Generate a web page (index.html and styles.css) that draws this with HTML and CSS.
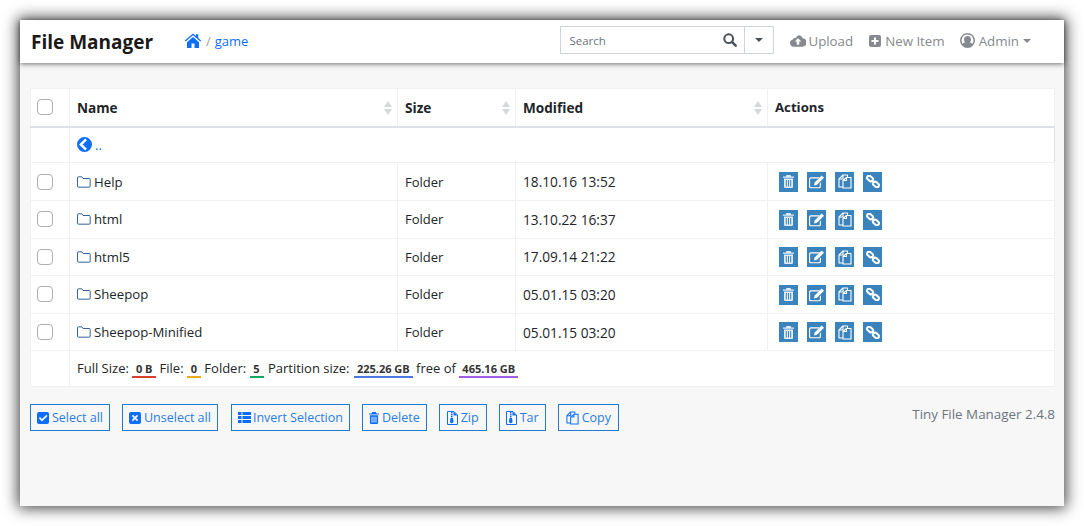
FILE: index.html
```html
<!DOCTYPE html>
<html lang="en">
<head>
  <meta charset="UTF-8" />
  <title>File Manager</title>
  <link rel="stylesheet" href="styles.css">
</head>
<body>
  <svg class="sprites" width="0" height="0">
    <symbol id="i-home" viewBox="0 0 24 20"><path d="M12 0.5 1 10l1.2 1.4L12 3l9.8 8.4L23 10l-4-3.5V1.5h-3v2.4zM4 12.2V20h6v-6h4v6h6v-7.8L12 5.2z"/></symbol>
    <symbol id="i-back" viewBox="0 0 16 16"><path fill-rule="evenodd" d="M8 0a8 8 0 1 0 0 16A8 8 0 0 0 8 0zm2.6 3.4L6 8l4.6 4.6-1.9 1.9L2.2 8l6.5-6.5z"/></symbol>
    <symbol id="i-folder" viewBox="0 0 15 13"><path fill="none" stroke="currentColor" d="M1.5.9h3.6l1.3 1.8h6.8a1 1 0 0 1 1 1v7.4a1 1 0 0 1-1 1H1.5a1 1 0 0 1-1-1V1.9a1 1 0 0 1 1-1z"/></symbol>
    <symbol id="i-search" viewBox="0 0 16 16"><circle cx="6.5" cy="6.5" r="5" fill="none" stroke="currentColor" stroke-width="2.3"/><path d="m10.2 10.2 4.3 4.3" stroke="currentColor" stroke-width="2.8" stroke-linecap="round"/></symbol>
    <symbol id="i-cloud" viewBox="0 0 17 12"><path fill-rule="evenodd" d="M9 0a4.6 4.6 0 0 1 4.3 3A4.3 4.3 0 0 1 13 12H4a3.8 3.8 0 0 1-1-7.5A3 3 0 0 1 6.300 2.700 4.600 4.600 0 0 1 9 0zm-.5 3L5 6.600h2.200V10h2.600V6.600H12z"/></symbol>
    <symbol id="i-plus" viewBox="0 0 12 12"><path fill-rule="evenodd" d="M2 0h8a2 2 0 0 1 2 2v8a2 2 0 0 1-2 2H2a2 2 0 0 1-2-2V2a2 2 0 0 1 2-2zm3 2.500V5H2.500v2H5v2.500h2V7h2.500V5H7V2.500z"/></symbol>
    <symbol id="i-user" viewBox="0 0 14 14"><path fill-rule="evenodd" d="M7 0a7 7 0 1 0 0 14A7 7 0 0 0 7 0zm0 1.500a5.500 5.500 0 0 1 4.400 8.800C10.800 9.300 9.900 8.800 9.100 8.600a3.300 3.300 0 1 0-4.200 0c-.8.200-1.700.7-2.300 1.700A5.500 5.500 0 0 1 7 1.500z"/></symbol>
    <symbol id="i-trash" viewBox="0 0 11 13"><path d="M3.500 0h4l.7 1.500H11v1.200H0V1.500h2.800zM1 3.500h9v8.200a1.300 1.300 0 0 1-1.300 1.300H2.300A1.300 1.300 0 0 1 1 11.700zm1.800 1.500v6.500h1V5zm2.200 0v6.500h1V5zm2.200 0v6.500h1V5z"/></symbol>
    <symbol id="i-edit" viewBox="0 0 16 14"><path d="M2 2h9.500L10.200 3.200H2.200a1 1 0 0 0-1 1v7.300a1 1 0 0 0 1 1h8.300a1 1 0 0 0 1-1V8.500l1.200-1.200v4.400a2 2 0 0 1-2 2H2a2 2 0 0 1-2-2V4a2 2 0 0 1 2-2z"/><path d="M13.500 0 16 2.500 8.500 10l-3.200.7.700-3.200z"/></symbol>
    <symbol id="i-copy" viewBox="0 0 14 15"><g stroke="currentColor" stroke-width="1.100" stroke-linejoin="round"><path fill="none" d="M1 5 5 1h4.500v12H1z"/><path fill="none" d="M5 1v4H1"/><path fill="var(--bg)" d="M5 6.500 8.500 3.500H13V14H5z"/><path fill="none" d="M8.500 3.500v3H5"/></g></symbol>
    <symbol id="i-link" viewBox="0 0 15 14"><g fill="none" stroke="currentColor" stroke-width="2.200"><rect x="0.800" y="1.600" width="7" height="4.400" rx="2.200" transform="rotate(40 4.300 3.800)"/><rect x="7.200" y="8" width="7" height="4.400" rx="2.200" transform="rotate(40 10.700 10.200)"/></g><path d="m6 5.500 3 3" stroke="currentColor" stroke-width="2.200"/></symbol>
    <symbol id="i-checked" viewBox="0 0 12 12"><path fill-rule="evenodd" d="M2 0h8a2 2 0 0 1 2 2v8a2 2 0 0 1-2 2H2a2 2 0 0 1-2-2V2a2 2 0 0 1 2-2zm7.300 2.800L5 7 3 5 1.800 6.200 5 9.400l5.500-5.400z"/></symbol>
    <symbol id="i-unchecked" viewBox="0 0 12 12"><path fill-rule="evenodd" d="M2 0h8a2 2 0 0 1 2 2v8a2 2 0 0 1-2 2H2a2 2 0 0 1-2-2V2a2 2 0 0 1 2-2zm2 2.800L2.800 4l2 2-2 2L4 9.200l2-2 2 2L9.200 8l-2-2 2-2L8 2.800l-2 2z"/></symbol>
    <symbol id="i-list" viewBox="0 0 13 11"><path d="M0 0h3.500v3H0zM4.500 0H13v3H4.500zM0 4h3.500v3H0zM4.500 4H13v3H4.500zM0 8h3.500v3H0zM4.500 8H13v3H4.500z"/></symbol>
    <symbol id="i-zip" viewBox="0 0 11 14"><path fill="none" stroke="currentColor" d="M.5.500h6.500l3.500 3.500v9.500H.5z"/><path d="M6.500.500V4.500h4zM4 1h1.500v1.500H4zM4 3h1.500v1.500H4zM4 5h1.500v1.500H4zM3.500 7h2.500l.5 3.500a1.500 1.500 0 1 1-3.500 0z"/></symbol>
  </svg>

  <div class="window">
    <nav class="topbar">
      <span class="brand">File Manager</span>
      <div class="crumbs">
        <svg class="ico-home"><use href="#i-home"/></svg>
        <span class="sep">/</span>
        <a>game</a>
      </div>
      <div class="search">
        <span class="search-text">Search</span>
        <svg class="ico-search"><use href="#i-search"/></svg>
        <span class="search-drop"><i class="caret"></i></span>
      </div>
      <a class="nav-link"><svg class="ico-cloud"><use href="#i-cloud"/></svg>Upload</a>
      <a class="nav-link nav-new"><svg class="ico-plus"><use href="#i-plus"/></svg>New Item</a>
      <a class="nav-link"><svg class="ico-user"><use href="#i-user"/></svg>Admin<i class="caret"></i></a>
    </nav>

    <main class="content">
      <table class="files">
        <colgroup>
          <col class="c-check"><col class="c-name"><col class="c-size"><col class="c-date"><col>
        </colgroup>
        <thead>
          <tr>
            <th><span class="check"></span></th>
            <th class="sort">Name</th>
            <th class="sort">Size</th>
            <th class="sort">Modified</th>
            <th class="th-actions">Actions</th>
          </tr>
        </thead>
        <tbody>
          <tr class="row-up">
            <td class="no-right"></td>
            <td colspan="4"><a class="up"><svg class="ico-back"><use href="#i-back"/></svg> ..</a></td>
          </tr>
          <tr>
            <td><span class="check"></span></td>
            <td class="name"><svg class="ico-folder"><use href="#i-folder"/></svg>Help</td>
            <td>Folder</td>
            <td class="when">18.10.16 13:52</td>
            <td class="actions">
              <a class="act"><svg class="ico-trash"><use href="#i-trash"/></svg></a><a class="act"><svg class="ico-edit"><use href="#i-edit"/></svg></a><a class="act"><svg class="ico-copy"><use href="#i-copy"/></svg></a><a class="act"><svg class="ico-link"><use href="#i-link"/></svg></a>
            </td>
          </tr>
          <tr>
            <td><span class="check"></span></td>
            <td class="name"><svg class="ico-folder"><use href="#i-folder"/></svg>html</td>
            <td>Folder</td>
            <td class="when">13.10.22 16:37</td>
            <td class="actions">
              <a class="act"><svg class="ico-trash"><use href="#i-trash"/></svg></a><a class="act"><svg class="ico-edit"><use href="#i-edit"/></svg></a><a class="act"><svg class="ico-copy"><use href="#i-copy"/></svg></a><a class="act"><svg class="ico-link"><use href="#i-link"/></svg></a>
            </td>
          </tr>
          <tr>
            <td><span class="check"></span></td>
            <td class="name"><svg class="ico-folder"><use href="#i-folder"/></svg>html5</td>
            <td>Folder</td>
            <td class="when">17.09.14 21:22</td>
            <td class="actions">
              <a class="act"><svg class="ico-trash"><use href="#i-trash"/></svg></a><a class="act"><svg class="ico-edit"><use href="#i-edit"/></svg></a><a class="act"><svg class="ico-copy"><use href="#i-copy"/></svg></a><a class="act"><svg class="ico-link"><use href="#i-link"/></svg></a>
            </td>
          </tr>
          <tr>
            <td><span class="check"></span></td>
            <td class="name"><svg class="ico-folder"><use href="#i-folder"/></svg>Sheepop</td>
            <td>Folder</td>
            <td class="when">05.01.15 03:20</td>
            <td class="actions">
              <a class="act"><svg class="ico-trash"><use href="#i-trash"/></svg></a><a class="act"><svg class="ico-edit"><use href="#i-edit"/></svg></a><a class="act"><svg class="ico-copy"><use href="#i-copy"/></svg></a><a class="act"><svg class="ico-link"><use href="#i-link"/></svg></a>
            </td>
          </tr>
          <tr>
            <td><span class="check"></span></td>
            <td class="name"><svg class="ico-folder"><use href="#i-folder"/></svg>Sheepop-Minified</td>
            <td>Folder</td>
            <td class="when">05.01.15 03:20</td>
            <td class="actions">
              <a class="act"><svg class="ico-trash"><use href="#i-trash"/></svg></a><a class="act"><svg class="ico-edit"><use href="#i-edit"/></svg></a><a class="act"><svg class="ico-copy"><use href="#i-copy"/></svg></a><a class="act"><svg class="ico-link"><use href="#i-link"/></svg></a>
            </td>
          </tr>
        </tbody>
        <tfoot>
          <tr>
            <td class="no-right"></td>
            <td colspan="4" class="summary">
              Full Size: <span class="badge b-red">0 B</span>
              File: <span class="badge b-yellow">0</span>
              Folder: <span class="badge b-green">5</span>
              Partition size: <span class="badge b-blue">225.26 GB</span>
              free of <span class="badge b-purple">465.16 GB</span>
            </td>
          </tr>
        </tfoot>
      </table>

      <div class="toolbar">
        <a class="btn"><svg class="ico-sq"><use href="#i-checked"/></svg>Select all</a>
        <a class="btn"><svg class="ico-sq"><use href="#i-unchecked"/></svg>Unselect all</a>
        <a class="btn btn-invert"><svg class="ico-list"><use href="#i-list"/></svg>Invert Selection</a>
        <a class="btn"><svg class="ico-trash-sm"><use href="#i-trash"/></svg>Delete</a>
        <a class="btn btn-wide"><svg class="ico-zip"><use href="#i-zip"/></svg>Zip</a>
        <a class="btn"><svg class="ico-zip"><use href="#i-zip"/></svg>Tar</a>
        <a class="btn btn-wide"><svg class="ico-copy-sm"><use href="#i-copy"/></svg>Copy</a>
        <span class="version">Tiny File Manager 2.4.8</span>
      </div>
    </main>
  </div>
</body>
</html>
```

FILE: styles.css
```css
html, body {
  margin: 0;
  height: 526px;
  overflow: hidden;
  background: #fff;
}

body {
  padding: 20px;
  box-sizing: border-box;
  font-family: "Open Sans", "Noto Sans", sans-serif;
  font-size: 13px;
  color: #212529;
}

svg {
  fill: currentColor;
  flex: none;
}

.sprites {
  position: absolute;
}

.window {
  width: 1044px;
  height: 486px;
  background: #f7f7f7;
  box-shadow: 0 0 14px 2px rgba(0, 0, 0, 0.75);
}

.topbar {
  display: flex;
  align-items: center;
  height: 43px;
  box-sizing: border-box;
  padding: 0 33px 3px 11px;
  background: #fff;
  box-shadow: 0 1px 5px rgba(0, 0, 0, 0.55);
  position: relative;
}

.brand {
  font-size: 19px;
  font-weight: 700;
  color: #1a1a1a;
  width: 153px;
  margin-top: 3px;
}

.crumbs {
  display: flex;
  align-items: center;
  color: #0d6efd;
  font-size: 13px;
  margin-top: 1px;
}

.ico-home {
  width: 18px;
  height: 15px;
}

.sep {
  color: #9aa0a6;
  margin: 0 4px 0 4px;
}

.search {
  display: flex;
  align-items: center;
  width: 214px;
  height: 28px;
  box-sizing: border-box;
  margin-left: auto;
  margin-right: 16px;
  border: 1px solid #ced4da;
  font-size: 11.5px;
  color: #6c757d;
}

.search-text {
  flex: 1;
  padding-left: 8px;
}

.ico-search {
  width: 14px;
  height: 14px;
  margin-right: 7px;
  color: #495057;
}

.search-drop {
  display: flex;
  align-items: center;
  justify-content: center;
  width: 28px;
  height: 26px;
  border-left: 1px solid #ced4da;
  color: #495057;
}

.caret {
  display: inline-block;
  border-top: 4px solid currentColor;
  border-left: 4px solid transparent;
  border-right: 4px solid transparent;
}

.nav-link {
  display: flex;
  align-items: center;
  margin-right: 16px;
  margin-top: 1px;
  color: #868a8e;
  font-size: 13.3px;
}

.nav-new {
  margin-right: 15px;
}

.nav-link:last-child {
  margin-right: 0;
}

.nav-link .caret {
  margin-left: 4px;
}

.ico-cloud {
  width: 16px;
  height: 12px;
  margin-right: 2px;
}

.ico-plus {
  width: 12px;
  height: 12px;
  margin-right: 4px;
}

.ico-user {
  width: 15px;
  height: 15px;
  margin-right: 4px;
}

.content {
  padding: 25px 9px 0 10px;
}

.files {
  width: 100%;
  table-layout: fixed;
  border-collapse: collapse;
  background: #fff;
}

.c-check {
  width: 39px;
}

.c-name {
  width: 328px;
}

.c-size {
  width: 118px;
}

.c-date {
  width: 252px;
}

.files th,
.files td {
  height: 37px;
  padding: 0 7px;
  box-sizing: border-box;
  border: 1px solid #f0f1f3;
  text-align: left;
  vertical-align: middle;
}

.files th {
  height: 38px;
  border-bottom: 2px solid #dee2e6;
  font-weight: 700;
  font-size: 13.6px;
  color: #212529;
}

.files .th-actions {
  font-size: 13.2px;
}

.files tbody tr {
  height: 37.6px;
}

.files tbody .row-up {
  height: 36.4px;
}

.files .row-up td {
  height: 34px;
  border-right-color: #dee2e6;
}

.files tfoot td {
  height: 36px;
}

.files td.no-right {
  border-right-color: #f0f1f3;
}

.sort {
  position: relative;
}

/* sort arrows in the header */
.sort::before,
.sort::after {
  content: "";
  position: absolute;
  right: 5px;
  border-left: 4px solid transparent;
  border-right: 4px solid transparent;
}

.sort::before {
  top: 12px;
  border-bottom: 6px solid #d6d8db;
}

.sort::after {
  top: 20px;
  border-top: 6px solid #d6d8db;
}

.files th:first-child,
.files td:first-child {
  padding-left: 6px;
}

.check {
  display: block;
  width: 16px;
  height: 16px;
  box-sizing: border-box;
  border: 1px solid #adb0b3;
  border-radius: 4px;
  background: #fff;
}

.up {
  display: flex;
  align-items: center;
  color: #0d6efd;
  gap: 3px;
}

.ico-back {
  width: 15px;
  height: 15px;
}

.name {
  font-size: 13.2px;
}

.when {
  font-size: 13.7px;
}

.ico-folder {
  width: 14px;
  height: 12px;
  margin-right: 3px;
  color: #23538f;
  vertical-align: -1px;
}

.files .actions {
  padding-left: 11px;
  white-space: nowrap;
}

.act {
  --bg: #3b83bd;
  display: inline-flex;
  align-items: center;
  justify-content: center;
  width: 19px;
  height: 20px;
  margin-right: 9px;
  background: var(--bg);
  color: #fff;
  vertical-align: middle;
}

.ico-trash {
  width: 11px;
  height: 13px;
  opacity: 0.85;
}

.ico-edit {
  width: 15px;
  height: 14px;
}

.ico-copy {
  width: 14px;
  height: 15px;
}

.ico-link {
  width: 14px;
  height: 13px;
}

.files .summary {
  font-size: 13px;
}

.badge {
  display: inline-block;
  padding: 0 2.5px;
  font-size: 11px;
  font-weight: 700;
  line-height: 15px;
  text-align: center;
  border-bottom: 2px solid;
  color: #333;
}

.b-red {
  border-color: #d8412f;
  min-width: 19px;
}

.b-yellow {
  border-color: #e9ab17;
  min-width: 9px;
}

.b-green {
  border-color: #14a85f;
  min-width: 9px;
  margin-right: 1px;
}

.b-blue {
  border-color: #4a78e0;
  margin-left: 1px;
  padding: 0 3px;
}

.b-purple {
  border-color: #a45ee5;
  padding: 0 3px;
}

.toolbar {
  display: flex;
  align-items: center;
  gap: 12px;
  margin-top: 17px;
}

.btn {
  --bg: #f7f7f7;
  display: flex;
  align-items: center;
  height: 27px;
  box-sizing: border-box;
  padding: 0 6px;
  border: 1px solid #1f7ad0;
  color: #2b7de0;
  font-size: 12.5px;
}

.btn-wide {
  padding: 0 7px;
}

.btn-invert {
  margin-left: 1px;
}

.btn svg {
  color: #0d6efd;
  margin-right: 3px;
}

.btn .ico-list {
  margin-right: 2px;
}

.ico-sq {
  width: 12px;
  height: 12px;
}

.ico-list {
  width: 13px;
  height: 11px;
}

.ico-trash-sm {
  width: 10px;
  height: 12px;
}

.ico-zip {
  width: 11px;
  height: 14px;
}

.ico-copy-sm {
  width: 13px;
  height: 14px;
}

.version {
  margin-left: auto;
  align-self: flex-start;
  margin-top: 1px;
  color: #6c757d;
  font-size: 13.4px;
}
```
